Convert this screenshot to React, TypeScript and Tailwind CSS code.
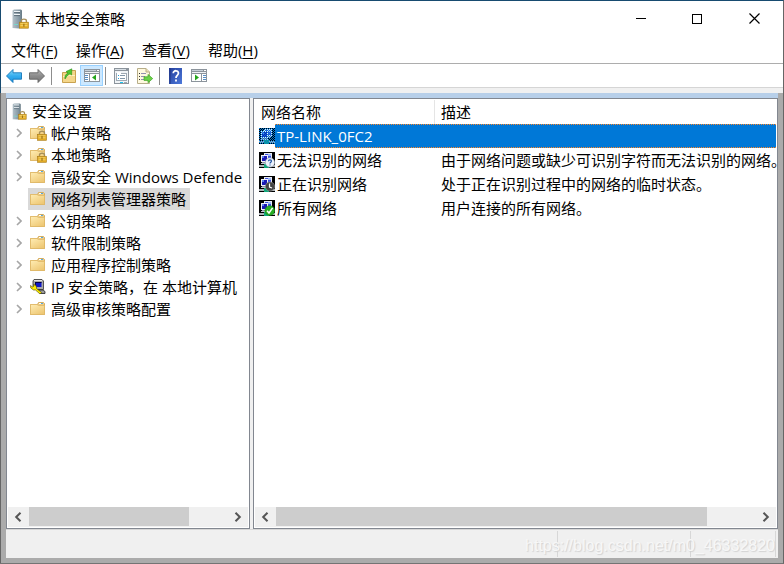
import { useState } from "react";
import type { ReactNode } from "react";

const fontStack = "font-['Open_Sans','Noto_Sans_CJK_SC',sans-serif]";

function Padlock({ x, y }: { x: number; y: number }) {
  return (
    <g transform={`translate(${x} ${y})`}>
      <path d="M2 4V2.6C2 0.3 7 0.3 7 2.6V4" fill="none" stroke="#a8905a" strokeWidth="1.4" />
      <rect x="0" y="4" width="9" height="6" fill="#e0a925" stroke="#a87a14" strokeWidth="0.6" />
      <path d="M1 5.5h7M1 7.5h7" stroke="#f9da72" strokeWidth="0.9" />
      <rect x="4" y="5.5" width="1" height="3" fill="#8a6410" />
    </g>
  );
}

function ServerIcon({ className }: { className: string }) {
  return (
    <svg viewBox="0 0 17 20" className={className} aria-hidden="true">
      <defs>
        <linearGradient id="tower" x1="0" x2="1">
          <stop offset="0" stopColor="#b3c1c9" />
          <stop offset="0.7" stopColor="#8699a4" />
          <stop offset="1" stopColor="#667983" />
        </linearGradient>
      </defs>
      <path d="M0.5 1.5L2 0.5H9L10 1.5V18L7 19.5L0.5 19Z" fill="url(#tower)" />
      <path d="M2 2.5h6M2 5.5h6" stroke="#eef4f7" strokeWidth="1.2" />
      <path d="M2 3.6h6M2 6.6h6" stroke="#4f616c" strokeWidth="0.8" />
      <path d="M2 15.5h4" stroke="#78d4c8" />
      <Padlock x={7.4} y={9.2} />
    </svg>
  );
}

function FolderIcon({ locked = false }: { locked?: boolean }) {
  return (
    <svg viewBox="0 0 17 16" className="h-4 w-[17px] shrink-0" aria-hidden="true">
      <defs>
        <linearGradient id="folder" x1="0" y1="0" x2="0.7" y2="1">
          <stop offset="0" stopColor="#ffedb4" />
          <stop offset="1" stopColor="#eec875" />
        </linearGradient>
      </defs>
      <path d="M7.5 3.5L8.5 1.5H13.5L14.5 2.5V13.5H0.5V3.5Z" fill="#edcb82" stroke="#d5ad60" />
      <path d="M9 2.5h4" stroke="#fff" />
      <path d="M11 2.5h2" stroke="#55a8de" />
      <path d="M0.5 3.5H7L8.5 4.5H14.5V13.5H0.5Z" fill="url(#folder)" stroke="#dfb968" strokeWidth="0.8" />
      {locked && <Padlock x={7.5} y={5.3} />}
    </svg>
  );
}

function IpIcon() {
  return (
    <svg viewBox="0 0 17 16" className="h-4 w-[17px] shrink-0" aria-hidden="true">
      <path d="M4 0.5h8l1.5 1.5v8.5H5L3 9V2Z" fill="#a9a9a9" stroke="#333" strokeWidth="0.8" />
      <path d="M4 1.5h8" stroke="#e4e4e4" />
      <rect x="5" y="3" width="6.5" height="5" fill="#1018c8" />
      <path d="M5 3.5h6.5M5.5 3v5" stroke="#000048" />
      <path d="M8 11h5l2 1.5v2H10Z" fill="#9c9c9c" stroke="#222" strokeWidth="0.8" />
      <path d="M0.5 6.5l2 1.5 1.5-1-0.5-1.5 2 0.5 1 2v1.5l5 4-1.5 1.5-4.5-4H3.5L0.8 9Z" fill="#ffef00" stroke="#4a4400" strokeWidth="0.6" />
    </svg>
  );
}

type Badge = "none" | "question" | "clock" | "check";

function NetworkIcon({ badge }: { badge: Badge }) {
  return (
    <svg viewBox="0 0 16 16" className="size-4 shrink-0" aria-hidden="true">
      <defs>
        <pattern id="dither" width="2" height="2" patternUnits="userSpaceOnUse">
          <rect width="1" height="1" fill="#0078d7" />
          <rect x="1" y="1" width="1" height="1" fill="#0078d7" />
        </pattern>
      </defs>
      <g shapeRendering="crispEdges">
        <rect width="16" height="16" fill="#000" />
        <rect x="5" y="1" width="8" height="7" fill="#e8eaf2" />
        <rect x="6" y="2" width="6" height="5" fill="#3c52e0" />
        <rect x="9" y="2" width="3" height="2" fill="#9cb8f8" />
        <rect x="8" y="8" width="4" height="2" fill="#b4b8c4" />
        <rect x="2" y="3" width="7" height="7" fill="#f2f2f6" />
        <rect x="3" y="4" width="5" height="5" fill="#1a18b4" />
        <rect x="3" y="4" width="2" height="2" fill="#5c80ec" />
        <rect x="3" y="10" width="5" height="1" fill="#9094a4" />
        <rect x="2" y="11" width="8" height="1" fill="#c4c8d2" />
        <rect x="0" y="13" width="16" height="2" fill="#aeb4b8" />
        <rect x="5" y="12" width="5" height="4" fill="#12a87c" />
        {badge === "none" && <rect width="16" height="16" fill="url(#dither)" />}
      </g>
      {badge === "question" && (
        <g>
          <circle cx="11" cy="10.5" r="4.7" fill="#edf2fb" stroke="#8794a5" strokeWidth="0.6" />
          <path d="M9.4 9.2C9.6 7.3 12.7 7.5 12.4 9.3C12.3 10.2 11 10.2 11 11.5M11 12.5v1.1" fill="none" stroke="#2055a4" strokeWidth="1.2" />
        </g>
      )}
      {badge === "clock" && (
        <g>
          <circle cx="11" cy="10.5" r="4.6" fill="#444" stroke="#9b9b9b" strokeWidth="0.6" />
          <path d="M10.5 7.5v3.5l2.5 1" fill="none" stroke="#fff" strokeWidth="1.2" />
        </g>
      )}
      {badge === "check" && (
        <g>
          <circle cx="10.8" cy="10.6" r="4.9" fill="#27ae23" stroke="#117b16" strokeWidth="0.5" />
          <path d="M8 10.7l2 2.3 3.6-5.1" fill="none" stroke="#fff" strokeWidth="1.5" />
        </g>
      )}
    </svg>
  );
}

function ArrowIcon({ forward = false }: { forward?: boolean }) {
  return (
    <svg viewBox="0 0 16 16" className="size-4 shrink-0" aria-hidden="true">
      <defs>
        <linearGradient id={forward ? "fwd" : "back"} x1="0" y1="0" x2="0" y2="1">
          <stop offset="0" stopColor={forward ? "#b8b8b8" : "#8bdcfc"} />
          <stop offset="0.5" stopColor={forward ? "#8b8b8b" : "#35adee"} />
          <stop offset="1" stopColor={forward ? "#777" : "#1991df"} />
        </linearGradient>
      </defs>
      <path
        d={forward ? "M15.5 8L9 1.5V4.8H0.5V11.2H9V14.5Z" : "M0.5 8L7 1.5V4.8H15.5V11.2H7V14.5Z"}
        fill={forward ? "url(#fwd)" : "url(#back)"}
        stroke={forward ? "#626262" : "#1476b9"}
        strokeWidth="0.9"
      />
    </svg>
  );
}

function UpFolderIcon() {
  return (
    <svg viewBox="0 0 16 16" className="size-4" aria-hidden="true">
      <path d="M1.5 4.5H8L9.5 2.5H14.5V14.5H1.5Z" fill="#f4d68a" stroke="#c9a24f" />
      <path d="M2 8.5H7L8 7.5H14" fill="none" stroke="#fff0bd" />
      <path d="M4 11C3.3 8 5 6 7 5L5 3.6L10.8 0.8L10.6 7L9 5.8C6.8 6.5 5.8 8.4 4 11Z" fill="#4ec52e" stroke="#26911a" strokeWidth="0.6" />
    </svg>
  );
}

function PaneIcon({ mirrored = false }: { mirrored?: boolean }) {
  return (
    <svg viewBox="0 0 16 14" className="h-3.5 w-4" shapeRendering="crispEdges" aria-hidden="true">
      <rect width="16" height="13" fill="#8c949c" />
      <rect x="1" y="1" width="11" height="1" fill="#c7d0d8" />
      <rect x="13" y="1" width="2" height="1" fill="#fff" />
      <rect x="1" y="3" width="14" height="1" fill="#eef1f3" />
      <rect x="1" y="5" width="14" height="7" fill="#fff" />
      {mirrored ? (
        <g>
          <rect x="10" y="4" width="1" height="9" fill="#8c949c" />
          <path d="M12 6h3v1h-3zM12 8h3v1h-3zM12 10h3v1h-3z" fill="#568ec5" />
          <path d="M4 5.5v6L8 8.5Z" fill="#25a51d" shapeRendering="auto" />
        </g>
      ) : (
        <g>
          <rect x="5" y="4" width="1" height="9" fill="#8c949c" />
          <path d="M1 6h3v1H1zM1 8h3v1H1zM1 10h3v1H1z" fill="#568ec5" />
          <path d="M12 5.5v6L8 8.5Z" fill="#25a51d" shapeRendering="auto" />
        </g>
      )}
    </svg>
  );
}

function PropertiesIcon() {
  return (
    <svg viewBox="0 0 15 16" className="h-4 w-[15px]" shapeRendering="crispEdges" aria-hidden="true">
      <rect width="15" height="16" fill="#8c949c" />
      <rect x="1" y="1" width="11" height="1" fill="#d8dfe5" />
      <rect x="1" y="3" width="13" height="12" fill="#f0f3f6" />
      <rect x="2" y="5" width="11" height="8" fill="#9fa9b3" />
      <rect x="3" y="6" width="9" height="6" fill="#fff" />
      <rect x="3" y="4" width="4" height="2" fill="#fff" />
      <path d="M4 7h1v1H4zM4 10h1v1H4z" fill="#1da0dd" />
      <path d="M6 7h5v1H6zM6 10h5v1H6z" fill="#8296a8" />
      <path d="M6 14h3v1H6z" fill="#19c4ef" />
      <path d="M10 14h3v1h-3z" fill="#a1a9b1" />
    </svg>
  );
}

function ExportIcon() {
  return (
    <svg viewBox="0 0 16 16" className="size-4" aria-hidden="true">
      <path d="M0.5 0.5H9L12.5 4V15.5H0.5Z" fill="#fff9df" stroke="#b7ad89" />
      <path d="M9 0.5V4H12.5" fill="#eee0b3" stroke="#b7ad89" />
      <path d="M2 5.5h1M2 8.5h1M2 11.5h1" stroke="#333" />
      <path d="M4 5.5h5M4 8.5h4M4 11.5h4" stroke="#9290ae" />
      <path d="M7 8.8h4V6.4l4.7 4.2-4.7 4.1v-2.3H7Z" fill="#6bd247" stroke="#3ea526" strokeWidth="0.7" />
    </svg>
  );
}

function HelpIcon() {
  return (
    <svg viewBox="0 0 13 16" className="h-4 w-[13px]" aria-hidden="true">
      <defs>
        <linearGradient id="helpBlue" x1="0" y1="0" x2="1" y2="1">
          <stop offset="0" stopColor="#243f9c" />
          <stop offset="1" stopColor="#4c78da" />
        </linearGradient>
      </defs>
      <rect width="13" height="16" fill="url(#helpBlue)" />
      <path d="M1 0v16" stroke="#203481" />
      <path d="M4.3 5.2C4.3 1.9 9.6 2 9.4 5.3C9.3 7.4 7 7.3 7 10M7 11.6v2" fill="none" stroke="#fff" strokeWidth="1.8" />
    </svg>
  );
}

function Chevron({ left = false }: { left?: boolean }) {
  return (
    <svg viewBox="0 0 8 10" className="h-2.5 w-2" aria-hidden="true">
      <path d={left ? "M6.5 0.8L2.2 5L6.5 9.2" : "M1.5 0.8L5.8 5L1.5 9.2"} fill="none" stroke="#555" strokeWidth="2" />
    </svg>
  );
}

function ScrollBar({ thumb }: { thumb: string }) {
  return (
    <div className="mx-px mb-px flex h-5 shrink-0 bg-[#f0f0f0]">
      <button type="button" aria-label="向左滚动" className="flex w-[21px] items-center justify-center pr-0.5">
        <Chevron left />
      </button>
      <div className="flex-1">
        <div className={`h-[19px] bg-[#cdcdcd] ${thumb}`} />
      </div>
      <button type="button" aria-label="向右滚动" className="flex w-[21px] items-center justify-center">
        <Chevron />
      </button>
    </div>
  );
}

function ToolButton({ label, active = false, children }: { label: string; active?: boolean; children: ReactNode }) {
  return (
    <button
      type="button"
      aria-label={label}
      className={`flex h-[21px] w-[23px] items-center justify-center border ${active ? "border-[#99d1ff] bg-[#cce8ff]" : "border-transparent"}`}
    >
      {children}
    </button>
  );
}

const menus = [
  ["文件", "F"],
  ["操作", "A"],
  ["查看", "V"],
  ["帮助", "H"],
];

const treeItems = [
  { label: "帐户策略", icon: "locked", expandable: true },
  { label: "本地策略", icon: "locked", expandable: true },
  { label: "高级安全 Windows Defende", icon: "folder", expandable: true },
  { label: "网络列表管理器策略", icon: "folder", expandable: false },
  { label: "公钥策略", icon: "folder", expandable: true },
  { label: "软件限制策略", icon: "folder", expandable: true },
  { label: "应用程序控制策略", icon: "folder", expandable: true },
  { label: "IP 安全策略，在 本地计算机", icon: "ip", expandable: true },
  { label: "高级审核策略配置", icon: "folder", expandable: true },
];

const networks: { name: string; description: string; badge: Badge }[] = [
  { name: "TP-LINK_0FC2", description: "", badge: "none" },
  { name: "无法识别的网络", description: "由于网络问题或缺少可识别字符而无法识别的网络。", badge: "question" },
  { name: "正在识别网络", description: "处于正在识别过程中的网络的临时状态。", badge: "clock" },
  { name: "所有网络", description: "用户连接的所有网络。", badge: "check" },
];

function TitleBar() {
  return (
    <header className="flex h-[35px] items-center pl-[11px]">
      <ServerIcon className="h-5 w-[17px]" />
      <h1 className="ml-1.5 flex-1">本地安全策略</h1>
      <button type="button" aria-label="最小化" className="flex h-[35px] w-14 items-center justify-center">
        <span className="h-px w-2.5 bg-black" />
      </button>
      <button type="button" aria-label="最大化" className="flex h-[35px] w-14 items-center justify-center">
        <span className="size-2.5 border border-black" />
      </button>
      <button type="button" aria-label="关闭" className="flex h-[35px] w-[58px] items-center justify-center">
        <svg viewBox="0 0 11 11" className="size-[11px]" aria-hidden="true">
          <path d="M0.5 0.5l10 10M10.5 0.5l-10 10" stroke="#000" strokeWidth="1.2" />
        </svg>
      </button>
    </header>
  );
}

function Tree() {
  const [selected, setSelected] = useState("网络列表管理器策略");
  return (
    <nav className="flex-1 overflow-hidden pt-px whitespace-nowrap">
      <div className="flex h-[22px] items-center pl-[5px]">
        <ServerIcon className="h-[17px] w-[15px]" />
        <span className="ml-[5px]">安全设置</span>
      </div>
      <ul>
        {treeItems.map((item) => (
          <li key={item.label} className="flex h-[22px] items-center">
            <span className="flex w-[21px] shrink-0 justify-center pl-0.5">
              {item.expandable && (
                <svg viewBox="0 0 6 10" className="h-2.5 w-1.5" aria-hidden="true">
                  <path d="M1 1l4 4-4 4" fill="none" stroke="#a6a6a6" strokeWidth="1.6" />
                </svg>
              )}
            </span>
            <button
              type="button"
              onClick={() => setSelected(item.label)}
              className={`flex h-[22px] shrink-0 items-center gap-1 pr-1 pl-0.5 ${selected === item.label ? "bg-[#d9d9d9]" : ""}`}
            >
              {item.icon === "ip" ? <IpIcon /> : <FolderIcon locked={item.icon === "locked"} />}
              <span>{item.label}</span>
            </button>
          </li>
        ))}
      </ul>
    </nav>
  );
}

const focusEdge = "bg-[repeating-linear-gradient(90deg,#ff8728_0_1px,#0078d7_1px_2px)]";

function NetworkTable() {
  return (
    <div className="flex-1 overflow-hidden pr-px pt-px">
      <table className="w-full table-fixed border-separate border-spacing-0 text-left whitespace-nowrap">
        <thead>
          <tr className="h-6">
            <th scope="col" className="w-[181px] border-r border-[#e5e5e5] p-0 pl-[7px] font-normal">网络名称</th>
            <th scope="col" className="p-0 pl-1.5 font-normal">描述</th>
          </tr>
        </thead>
        <tbody>
          {networks.map((network, index) => (
            <tr key={network.name} className="h-6">
              <td className="p-0">
                <div className="flex h-6 items-center pl-[5px]">
                  <NetworkIcon badge={network.badge} />
                  <div className={`h-6 flex-1 py-px ${index === 0 ? focusEdge : ""}`}>
                    <div className={`flex h-[22px] items-center pl-0.5 ${index === 0 ? "bg-[#0078d7] text-white" : ""}`}>
                      {network.name}
                    </div>
                  </div>
                </div>
              </td>
              <td className="p-0">
                <div className={`h-6 py-px ${index === 0 ? focusEdge : ""}`}>
                  <div className={`flex h-[22px] items-center pl-1.5 ${index === 0 ? "bg-[#0078d7]" : ""}`}>
                    {network.description}
                  </div>
                </div>
              </td>
            </tr>
          ))}
        </tbody>
      </table>
    </div>
  );
}

export default function App() {
  return (
    <div className={`flex h-screen flex-col border-t border-r border-b border-t-[#174b70] border-r-[#666] border-b-[#747474] bg-white text-[15px] leading-[22px] text-black ${fontStack}`}>
      <div className="border-l border-[#174b70]">
        <TitleBar />
        <div className="flex h-[27px] items-center gap-[18px] pl-2.5">
          {menus.map(([label, key]) => (
            <button key={key} type="button">
              {label}(<span className="underline underline-offset-2">{key}</span>)
            </button>
          ))}
        </div>
        <div className="flex h-6 items-center border-t border-[#adadad] pl-px">
          <ToolButton label="后退"><ArrowIcon /></ToolButton>
          <ToolButton label="前进"><ArrowIcon forward /></ToolButton>
          <span className="mr-[5px] ml-[3px] h-[18px] w-px bg-[#8d8d8d]" />
          <ToolButton label="上一级"><UpFolderIcon /></ToolButton>
          <ToolButton label="显示控制台树" active><PaneIcon /></ToolButton>
          <span className="mr-1 ml-0.5 h-[18px] w-px bg-[#8d8d8d]" />
          <ToolButton label="属性"><PropertiesIcon /></ToolButton>
          <ToolButton label="导出列表"><ExportIcon /></ToolButton>
          <span className="mr-1 ml-[3px] h-[18px] w-px bg-[#8d8d8d]" />
          <ToolButton label="帮助主题"><HelpIcon /></ToolButton>
          <ToolButton label="显示操作窗格"><PaneIcon mirrored /></ToolButton>
        </div>
        <div className="h-1.5 border-t border-[#d5d5d5] bg-[#f0f0f0]" />
      </div>

      <div className="flex min-h-0 flex-1 flex-col border-l border-[#666] bg-[#ababab] px-[5px] pb-[5px]">
        <div className="h-[5px] shrink-0 bg-[#b7cfe9]" />
        <main className="flex min-h-0 flex-1 gap-[3px] bg-[#f0f0f0]">
          <section className="flex w-[244px] shrink-0 flex-col border border-[#828790] bg-white">
            <Tree />
            <ScrollBar thumb="w-[81%]" />
          </section>
          <section className="flex min-w-0 flex-1 flex-col border border-[#828790] bg-white">
            <NetworkTable />
            <ScrollBar thumb="w-[90%]" />
          </section>
        </main>
        <footer className="relative flex h-[29px] shrink-0 justify-end border-t border-[#d7d7d7] bg-[#f0f0f0] pr-0.5">
          <span className="my-px w-[133px] border-l border-[#d7d7d7]" />
          <span className="my-px w-[86px] border-x border-[#d7d7d7]" />
          <span className="absolute top-1 right-[3px] font-['Liberation_Sans',sans-serif] text-base leading-6 text-[#f7f7f7] [text-shadow:1px_1px_1px_#d2d2d2]">
            https://blog.csdn.net/m0_46332820
          </span>
        </footer>
      </div>
    </div>
  );
}
